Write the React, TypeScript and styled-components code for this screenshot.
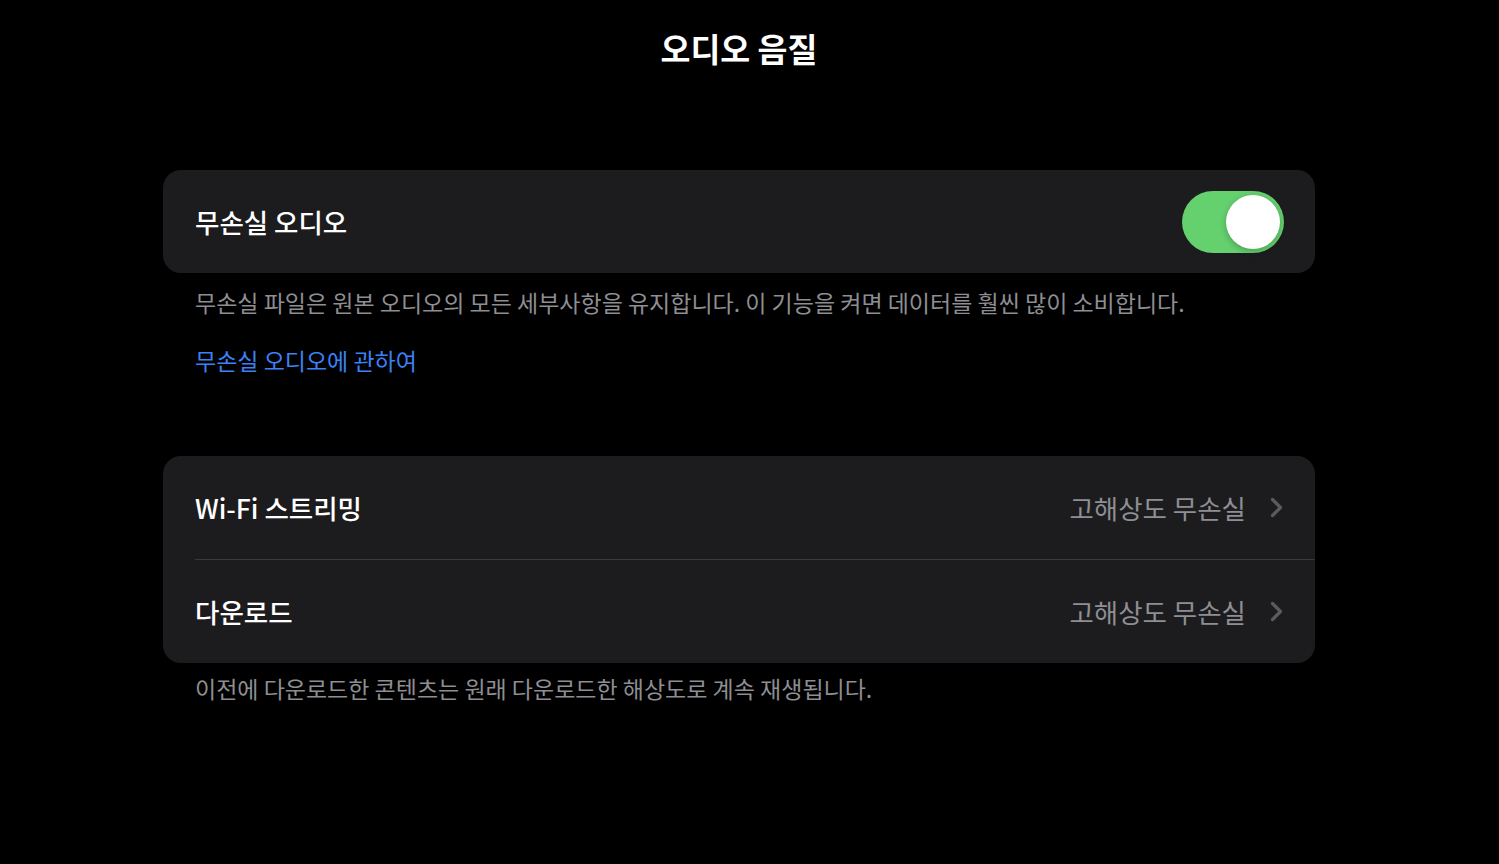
import React, { useState } from "react";
import styled, { createGlobalStyle } from "styled-components";

const GlobalStyle = createGlobalStyle`
  html, body {
    margin: 0;
    padding: 0;
    background: #000000;
  }
  body {
    font-family: "Noto Sans CJK KR", "Noto Sans", sans-serif;
    color: #ffffff;
  }
`;

export default function App() {
  const [lossless, setLossless] = useState(true);

  return (
    <>
      <GlobalStyle />
      <Page>
        <Title>오디오 음질</Title>

        <Section>
          <Card>
            <Row>
              <RowLabel>무손실 오디오</RowLabel>
              <Toggle
                $on={lossless}
                onClick={() => setLossless(!lossless)}
                aria-pressed={lossless}
              >
                <Knob $on={lossless} />
              </Toggle>
            </Row>
          </Card>
          <Footnote>
            무손실 파일은 원본 오디오의 모든 세부사항을 유지합니다. 이 기능을 켜면 데이터를 훨씬 많이 소비합니다.
          </Footnote>
          <InfoLink href="#">무손실 오디오에 관하여</InfoLink>
        </Section>

        <Section $gap={79}>
          <Card>
            <Row>
              <RowLabel>Wi-Fi 스트리밍</RowLabel>
              <RowValue>
                고해상도 무손실
                <Chevron />
              </RowValue>
            </Row>
            <Divider />
            <Row>
              <RowLabel>다운로드</RowLabel>
              <RowValue>
                고해상도 무손실
                <Chevron />
              </RowValue>
            </Row>
          </Card>
          <Footnote $top={8}>
            이전에 다운로드한 콘텐츠는 원래 다운로드한 해상도로 계속 재생됩니다.
          </Footnote>
        </Section>
      </Page>
    </>
  );
}

const Chevron = () => (
  <ChevronSvg viewBox="0 0 13 21" width="13" height="21">
    <path
      d="M2.5 2.5 L10.5 10.5 L2.5 18.5"
      fill="none"
      stroke="#5a5a5f"
      strokeWidth="3.2"
      strokeLinecap="round"
      strokeLinejoin="round"
    />
  </ChevronSvg>
);

const Page = styled.div`
  width: 1152px;
  margin: 0 0 0 163px;
  padding: 24px 0 0 0;
  display: flex;
  flex-direction: column;
`;

const Title = styled.h1`
  margin: 0;
  text-align: center;
  font-size: 32.5px;
  font-weight: 700;
  line-height: 48px;
  color: #ffffff;
`;

const Section = styled.section<{ $gap?: number }>`
  margin-top: ${(p) => p.$gap ?? 98}px;
  display: flex;
  flex-direction: column;
`;

const Card = styled.div`
  background: #1c1c1e;
  border-radius: 18px;
  overflow: hidden;
`;

const Row = styled.div`
  height: 103px;
  padding: 0 32px 0 32px;
  display: flex;
  align-items: center;
  justify-content: space-between;
  box-sizing: border-box;
`;

const RowLabel = styled.span`
  font-size: 26.5px;
  font-weight: 500;
  color: #ffffff;
`;

const RowValue = styled.span`
  display: flex;
  align-items: center;
  gap: 24px;
  font-size: 26.5px;
  font-weight: 400;
  color: #8e8e93;
`;

const ChevronSvg = styled.svg`
  display: block;
`;

const Divider = styled.div`
  height: 1px;
  margin-left: 32px;
  background: #3a3a3c;
`;

const Toggle = styled.button<{ $on: boolean }>`
  width: 102px;
  height: 62px;
  margin-right: -1px;
  border: none;
  padding: 0;
  border-radius: 31px;
  background: ${(p) => (p.$on ? "#65d06e" : "#39393d")};
  position: relative;
  cursor: pointer;
`;

const Knob = styled.span<{ $on: boolean }>`
  position: absolute;
  top: 4px;
  left: ${(p) => (p.$on ? "44px" : "4px")};
  width: 54px;
  height: 54px;
  border-radius: 50%;
  background: #ffffff;
  box-shadow: 0 2px 6px rgba(0, 0, 0, 0.25);
`;

const Footnote = styled.p<{ $top?: number }>`
  margin: ${(p) => p.$top ?? 12}px 0 0 32px;
  font-size: 23px;
  line-height: 34px;
  color: #8e8e93;
`;

const InfoLink = styled.a`
  margin: 24px 0 0 32px;
  font-size: 23px;
  line-height: 34px;
  color: #3b82f6;
  text-decoration: none;
  align-self: flex-start;
`;
